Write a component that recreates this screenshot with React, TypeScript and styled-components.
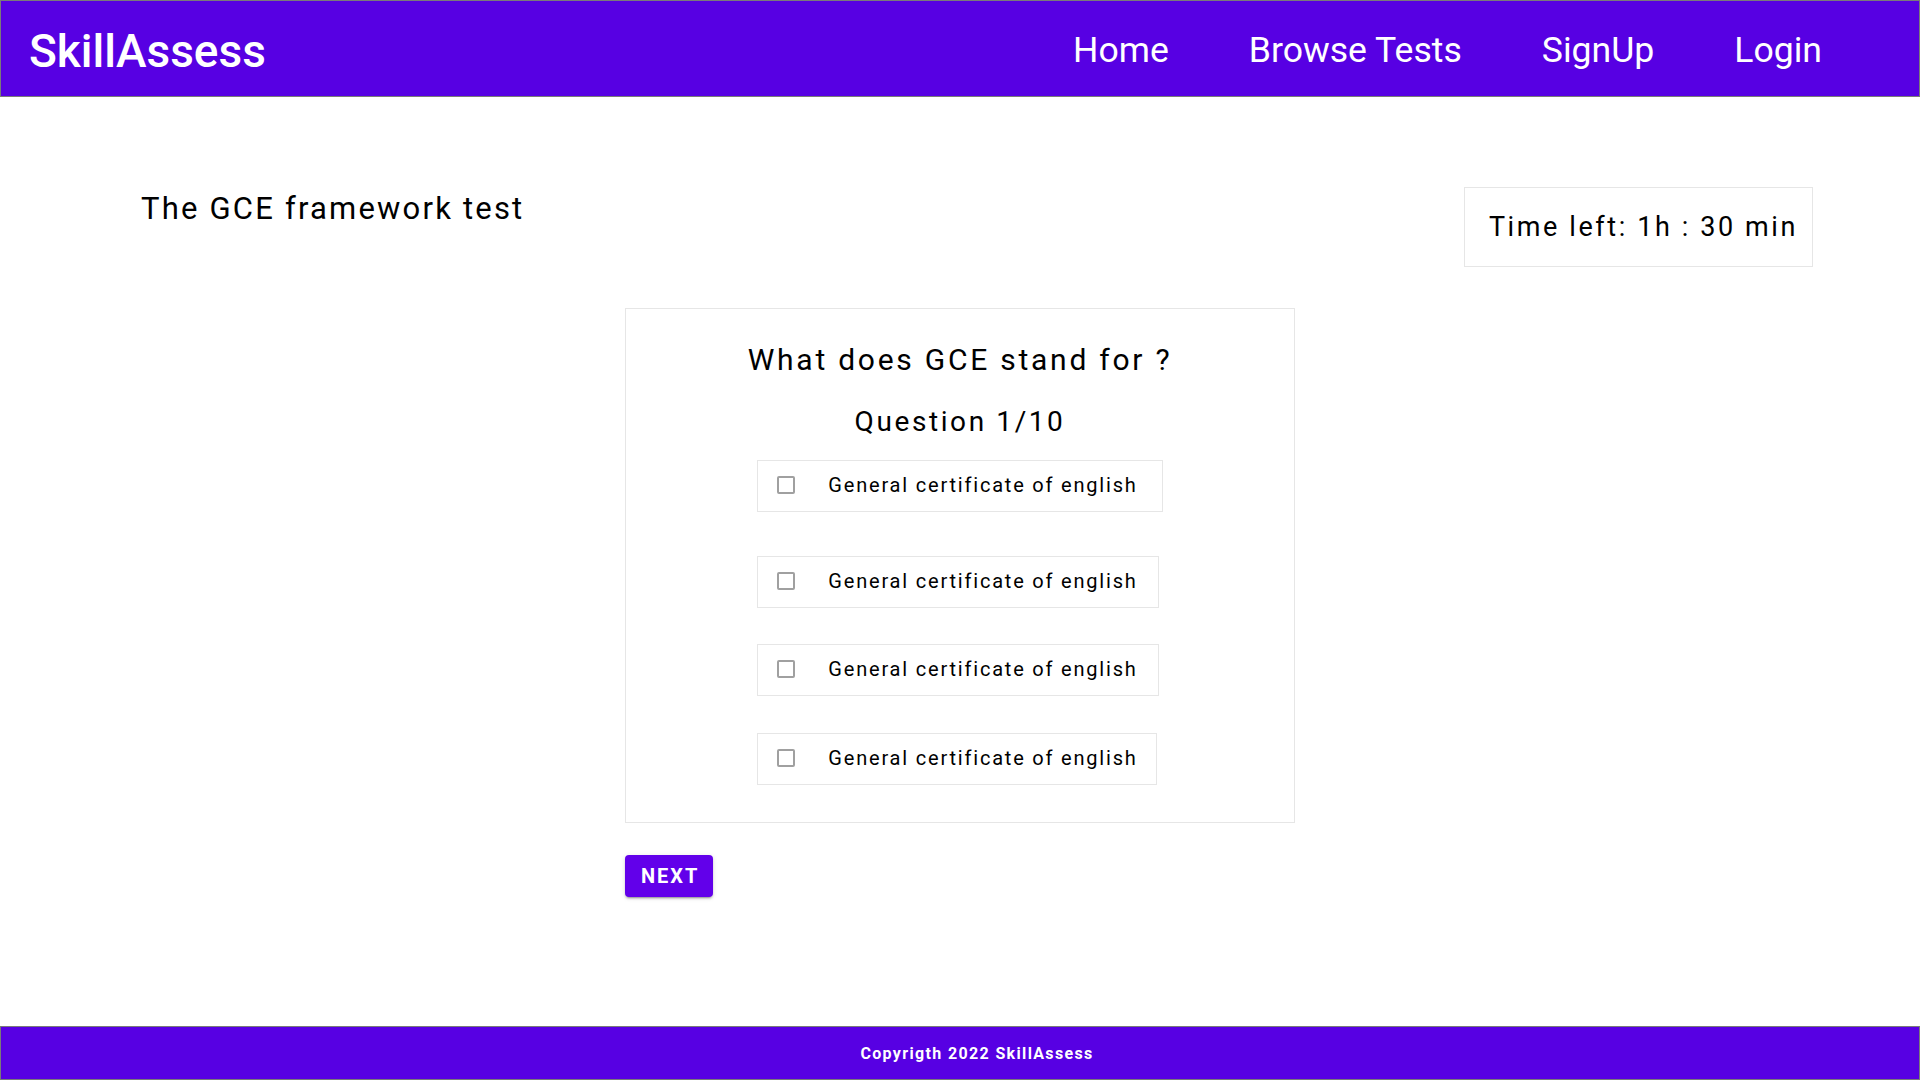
import React from "react";
import styled, { createGlobalStyle } from "styled-components";

const GlobalStyle = createGlobalStyle`
  html, body {
    margin: 0;
    padding: 0;
    background: #ffffff;
  }
  body {
    font-family: Roboto, "Liberation Sans", Arial, sans-serif;
    color: #000000;
  }
  * { box-sizing: border-box; }
`;

const Page = styled.div`
  min-height: 100vh;
  display: flex;
  flex-direction: column;
`;

const Header = styled.header`
  height: 97px;
  background: #5700e3;
  border: 1px solid #7a7a7a;
  display: flex;
  align-items: center;
  justify-content: space-between;
  padding: 4px 97px 0 28px;
`;

const Logo = styled.div`
  color: #ffffff;
  font-size: 46px;
  font-weight: 500;
  line-height: 1;
`;

const Nav = styled.nav`
  display: flex;
  align-items: center;
  gap: 80px;
`;

const NavLink = styled.a`
  color: #ffffff;
  font-size: 35.6px;
  font-weight: 400;
  text-decoration: none;
  line-height: 1;
  cursor: pointer;
`;

const Main = styled.main`
  flex: 1;
  display: flex;
  flex-direction: column;
`;

const TopRow = styled.div`
  display: flex;
  align-items: flex-start;
  justify-content: space-between;
  padding: 90px 107px 0 141px;
`;

const TestTitle = styled.h1`
  margin: 3px 0 0;
  font-size: 31px;
  font-weight: 400;
  letter-spacing: 2.2px;
  line-height: normal;
`;

const Timer = styled.div`
  border: 1px solid #e6e6e6;
  padding: 23px 14px 23px 24px;
  font-size: 27px;
  font-weight: 400;
  letter-spacing: 2.6px;
  line-height: normal;
`;

const Center = styled.div`
  width: 670px;
  margin: 41px auto 0;
  display: flex;
  flex-direction: column;
  align-items: flex-start;
`;

const Card = styled.section`
  width: 100%;
  border: 1px solid #e6e6e6;
  padding: 33px 0 37px;
  display: flex;
  flex-direction: column;
  align-items: center;
`;

const Question = styled.h2`
  margin: 0;
  font-size: 30px;
  font-weight: 400;
  letter-spacing: 2.75px;
  line-height: normal;
`;

const Counter = styled.h3`
  margin: 28px 0 0;
  font-size: 28px;
  font-weight: 400;
  letter-spacing: 2.6px;
  line-height: normal;
`;

const Options = styled.div`
  margin-top: 22px;
  display: flex;
  flex-direction: column;
  align-items: flex-start;
`;

const Option = styled.label<{ $gap: number; $padRight: number }>`
  margin-top: ${(p) => p.$gap}px;
  height: 52px;
  border: 1px solid #e6e6e6;
  display: flex;
  align-items: center;
  padding: 0 ${(p) => p.$padRight}px 3px 19px;
  cursor: pointer;
`;

const Check = styled.input`
  appearance: none;
  -webkit-appearance: none;
  margin: 0 33px 0 0;
  width: 18px;
  height: 18px;
  border: 2px solid #a0a0a0;
  border-radius: 2px;
  background: #ffffff;
  flex-shrink: 0;
`;

const OptionText = styled.span`
  font-size: 20px;
  font-weight: 400;
  letter-spacing: 1.8px;
  line-height: normal;
`;

const NextButton = styled.button`
  margin-top: 32px;
  height: 42px;
  padding: 0 14px 0 16px;
  border: none;
  border-radius: 4px;
  background: #6200ea;
  color: #ffffff;
  font-family: Roboto, "Liberation Sans", Arial, sans-serif;
  font-size: 20px;
  font-weight: 700;
  letter-spacing: 2px;
  text-transform: uppercase;
  cursor: pointer;
  box-shadow: 0 3px 1px -2px rgba(0, 0, 0, 0.2), 0 2px 2px 0 rgba(0, 0, 0, 0.14),
    0 1px 5px 0 rgba(0, 0, 0, 0.12);
`;

const Footer = styled.footer`
  height: 54px;
  background: #5700e3;
  border: 1px solid #7a7a7a;
  display: flex;
  align-items: center;
  justify-content: center;
  padding: 0 0 0 34px;
`;

const FooterText = styled.span`
  color: #ffffff;
  font-size: 16px;
  font-weight: 700;
  letter-spacing: 1.35px;
`;

const options = [
  { text: "General certificate of english", gap: 0, pad: 24 },
  { text: "General certificate of english", gap: 44, pad: 20 },
  { text: "General certificate of english", gap: 36, pad: 20 },
  { text: "General certificate of english", gap: 37, pad: 18 },
];

export default function App() {
  return (
    <Page>
      <GlobalStyle />
      <Header>
        <Logo>SkillAssess</Logo>
        <Nav>
          <NavLink>Home</NavLink>
          <NavLink>Browse Tests</NavLink>
          <NavLink>SignUp</NavLink>
          <NavLink>Login</NavLink>
        </Nav>
      </Header>
      <Main>
        <TopRow>
          <TestTitle>The GCE framework test</TestTitle>
          <Timer>Time left: 1h : 30 min</Timer>
        </TopRow>
        <Center>
          <Card>
            <Question>What does GCE stand for ?</Question>
            <Counter>Question 1/10</Counter>
            <Options>
              {options.map((o, i) => (
                <Option key={i} $gap={o.gap} $padRight={o.pad}>
                  <Check type="checkbox" />
                  <OptionText>{o.text}</OptionText>
                </Option>
              ))}
            </Options>
          </Card>
          <NextButton>Next</NextButton>
        </Center>
      </Main>
      <Footer>
        <FooterText>Copyrigth 2022 SkillAssess</FooterText>
      </Footer>
    </Page>
  );
}
